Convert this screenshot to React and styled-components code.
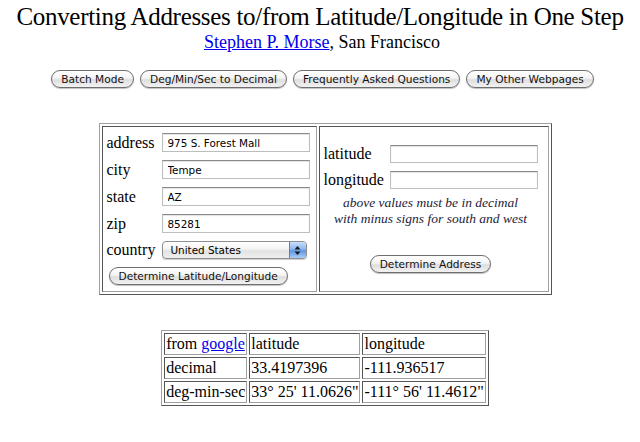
import styled, { createGlobalStyle } from "styled-components"

const GlobalStyle = createGlobalStyle`
    body {
        margin: 0;
        background: #fff;
        font-family: "Liberation Serif", "Times New Roman", serif;
        color: #000;
    }
`

const App = () => {
    return (
        <Page>
            <GlobalStyle />
            <Title>Converting Addresses to/from Latitude/Longitude in One Step</Title>
            <Byline>
                <Link href="#">Stephen P. Morse</Link>, San Francisco
            </Byline>

            <ButtonRow>
                <AquaButton>Batch Mode</AquaButton>
                <AquaButton>Deg/Min/Sec to Decimal</AquaButton>
                <AquaButton>Frequently Asked Questions</AquaButton>
                <AquaButton>My Other Webpages</AquaButton>
            </ButtonRow>

            <Section>
                <FormTable>
                    <tbody>
                        <tr>
                            <FormCell>
                                <AddressGrid>
                                    <Label>address</Label>
                                    <TextBox value="975 S. Forest Mall" readOnly />
                                    <Label>city</Label>
                                    <TextBox value="Tempe" readOnly />
                                    <Label>state</Label>
                                    <TextBox value="AZ" readOnly />
                                    <Label>zip</Label>
                                    <TextBox value="85281" readOnly />
                                    <Label>country</Label>
                                    <Select>
                                        <span>United States</span>
                                        <SelectArrows>
                                            <svg width="7" height="11" viewBox="0 0 7 11">
                                                <path d="M3.5 1 L6.5 4.5 H0.5 Z" fill="#1a1a1a" />
                                                <path d="M3.5 10 L6.5 6.5 H0.5 Z" fill="#1a1a1a" />
                                            </svg>
                                        </SelectArrows>
                                    </Select>
                                </AddressGrid>
                                <AquaButton $mt="8px" $ml="2px">Determine Latitude/Longitude</AquaButton>
                            </FormCell>
                            <FormCell $center>
                                <CoordGrid>
                                    <Label>latitude</Label>
                                    <TextBox $h="18px" />
                                    <Label>longitude</Label>
                                    <TextBox $h="18px" />
                                </CoordGrid>
                                <Note>
                                    above values must be in decimal<br />
                                    with minus signs for south and west
                                </Note>
                                <AquaButton $mt="28px">Determine Address</AquaButton>
                            </FormCell>
                        </tr>
                    </tbody>
                </FormTable>

                <ResultTable>
                    <tbody>
                        <tr>
                            <Cell>from <Link href="#">google</Link></Cell>
                            <Cell>latitude</Cell>
                            <Cell>longitude</Cell>
                        </tr>
                        <tr>
                            <Cell>decimal</Cell>
                            <Cell>33.4197396</Cell>
                            <Cell>-111.936517</Cell>
                        </tr>
                        <tr>
                            <Cell>deg-min-sec</Cell>
                            <Cell>33° 25' 11.0626"</Cell>
                            <Cell>-111° 56' 11.4612"</Cell>
                        </tr>
                    </tbody>
                </ResultTable>
            </Section>
        </Page>
    )
}

// ///// Style //////
const Page = styled.div`
    width: 640px;
    padding-top: 2px;
    text-align: center;
`
const Title = styled.h1`
    margin: 0;
    font-size: 25px;
    letter-spacing: -0.3px;
    line-height: 30px;
    font-weight: normal;
    white-space: nowrap;
`
const Byline = styled.div`
    font-size: 18px;
    line-height: 20px;
    margin-left: 4px;
`
const Link = styled.a`
    color: #0000ee;
    text-decoration: underline;
`

// buttons
const ButtonRow = styled.div`
    display: flex;
    justify-content: center;
    gap: 6px;
    margin-top: 18px;
    padding-left: 5px;
`
const AquaButton = styled.button`
    height: 18px;
    padding: 0 9px;
    margin-top: ${props => props.$mt || 0};
    margin-left: ${props => props.$ml || 0};
    border: 1px solid #6e6e6e;
    border-radius: 9px;
    background: linear-gradient(#ffffff 0%, #f4f4f4 45%, #dedede 55%, #f2f2f2 100%);
    box-shadow: 0 1px 1px rgba(0, 0, 0, 0.25);
    font-family: "DejaVu Sans", sans-serif;
    font-size: 10.6px;
    line-height: 16px;
    color: #111;
    white-space: nowrap;
`

// address form
const Section = styled.div`
    padding-left: 10px;
    display: flex;
    flex-direction: column;
    align-items: center;
`
const FormTable = styled.table`
    margin-top: 35px;
    border: 1px solid;
    border-color: #a0a0a0 #555 #555 #a0a0a0;
    border-spacing: 2px;
`
const FormCell = styled.td`
    border: 1px solid;
    border-color: #555 #a0a0a0 #a0a0a0 #555;
    padding: ${props => props.$center ? "0 10px 0 4px" : "6px 6px 6px 4px"};
    vertical-align: middle;
    text-align: ${props => props.$center ? "center" : "left"};
`
const AddressGrid = styled.div`
    display: grid;
    grid-template-columns: 55px 148px;
    row-gap: 8px;
    align-items: center;
    text-align: left;
`
const CoordGrid = styled.div`
    display: grid;
    grid-template-columns: 66px 148px;
    row-gap: 8px;
    align-items: center;
    text-align: left;
`
const Label = styled.span`
    font-size: 16px;
    line-height: 18px;
`
const TextBox = styled.input`
    box-sizing: border-box;
    width: 148px;
    height: ${props => props.$h || "19px"};
    padding: 0 5px;
    border: 1px solid #bdbdbd;
    border-top-color: #8a8a8a;
    box-shadow: inset 0 1px 1px rgba(0, 0, 0, 0.12);
    font-family: "DejaVu Sans", sans-serif;
    font-size: 10.4px;
    color: #000;
    outline: none;
`
const Select = styled.div`
    box-sizing: border-box;
    width: 145px;
    height: 18px;
    display: flex;
    align-items: center;
    justify-content: space-between;
    padding-left: 8px;
    border: 1px solid #8e8e8e;
    border-radius: 4px;
    background: linear-gradient(#ffffff 0%, #f3f3f3 45%, #e2e2e2 55%, #efefef 100%);
    box-shadow: 0 1px 1px rgba(0, 0, 0, 0.2);
    font-family: "DejaVu Sans", sans-serif;
    font-size: 10.4px;
    overflow: hidden;
`
const SelectArrows = styled.div`
    width: 16px;
    height: 100%;
    display: flex;
    align-items: center;
    justify-content: center;
    border-left: 1px solid #5a7fb8;
    background: linear-gradient(#c9defa 0%, #8cb6ee 45%, #5f95e0 55%, #a9cdf7 100%);
`
const Note = styled.div`
    margin-top: 6px;
    font-size: 13.5px;
    line-height: 16px;
    font-style: italic;
    color: #1c1c3a;
`

// results
const ResultTable = styled.table`
    margin-top: 35px;
    border: 1px solid;
    border-color: #a0a0a0 #555 #555 #a0a0a0;
    border-spacing: 2px;
    text-align: left;
`
const Cell = styled.td`
    border: 1px solid;
    border-color: #555 #a0a0a0 #a0a0a0 #555;
    padding: 1px;
    font-size: 16px;
    line-height: 18px;
    white-space: nowrap;
`

export default App
